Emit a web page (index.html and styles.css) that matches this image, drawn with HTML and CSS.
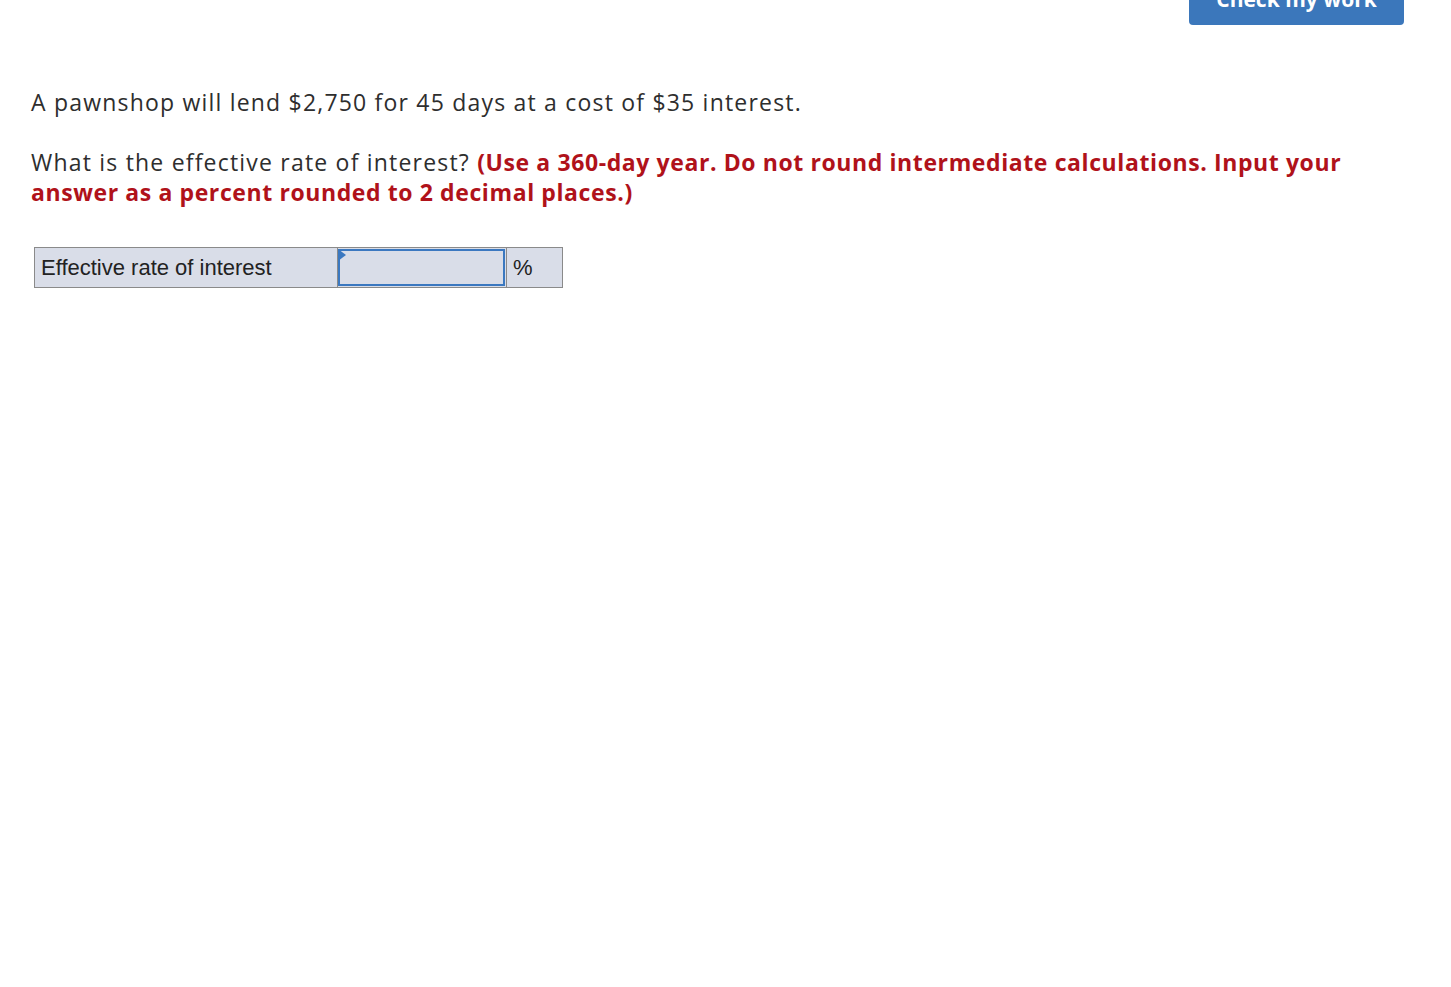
FILE: index.html
```html
<!DOCTYPE html>
<html>
<head>
<meta charset="utf-8">
<link rel="stylesheet" href="styles.css">
</head>
<body>
<div class="topbar">
  <button class="check-btn">Check my work</button>
</div>
<div class="question">
  <p class="para">A pawnshop will lend $2,750 for 45 days at a cost of $35 interest.</p>
  <p class="para">What is the effective rate of interest? <strong class="instr">(Use a 360-day year. Do not round intermediate calculations. Input your answer as a percent rounded to 2 decimal places.)</strong></p>
</div>
<table class="answer-table">
  <tr>
    <td class="label-cell">Effective rate of interest</td>
    <td class="input-cell"><div class="input-box"><span class="flag"></span></div></td>
    <td class="unit-cell">%</td>
  </tr>
</table>
</body>
</html>
```

FILE: styles.css
```css
html, body {
  margin: 0;
  padding: 0;
  background: #ffffff;
}
body {
  font-family: "Open Sans", sans-serif;
  color: #2e2e2e;
}
.topbar {
  display: flex;
  justify-content: flex-end;
  padding-right: 47px;
  height: 25px;
  overflow: hidden;
}
.check-btn {
  margin-top: -20px;
  width: 215px;
  height: 45px;
  border: none;
  border-radius: 0 0 4px 4px;
  background: #3b77bb;
  color: #ffffff;
  font-family: "Open Sans", sans-serif;
  font-weight: 700;
  font-size: 21px;
  padding: 9px 0 0 0;
  line-height: 20px;
  display: flex;
  justify-content: center;
  align-items: flex-start;
  box-sizing: border-box;
}
.question {
  padding: 0 32px 0 31px;
  margin-top: 62px;
}
.para {
  margin: 0 0 30px 0;
  font-size: 23px;
  line-height: 30px;
  letter-spacing: 1.2px;
}
.instr {
  color: #b0121a;
  font-weight: 700;
  letter-spacing: 0.6px;
}
.answer-table {
  margin: 40px 0 0 34px;
  border-collapse: collapse;
  border: 1px solid #8a8a8a;
  font-family: "Liberation Sans", Arial, sans-serif;
  font-size: 22px;
  color: #222;
  table-layout: fixed;
}
.answer-table td {
  background: #d9dde8;
  height: 40px;
  padding: 0;
  vertical-align: middle;
  box-sizing: border-box;
}
.label-cell {
  width: 303px;
  padding-left: 6px !important;
  border-right: 1px solid #8a8a8a;
}
.input-cell {
  width: 169px;
  border-right: 1px solid #8a8a8a;
}
.input-box {
  position: relative;
  margin: 1px 1px 1px 0;
  border: 2px solid #3b78c0;
  box-sizing: border-box;
  height: 37px;
}
.flag {
  position: absolute;
  left: -2px;
  top: -2px;
  width: 0;
  height: 0;
  border-top: 6px solid transparent;
  border-bottom: 6px solid transparent;
  border-left: 8px solid #3b78c0;
}
.unit-cell {
  width: 56px;
  padding-left: 6px !important;
}
```
